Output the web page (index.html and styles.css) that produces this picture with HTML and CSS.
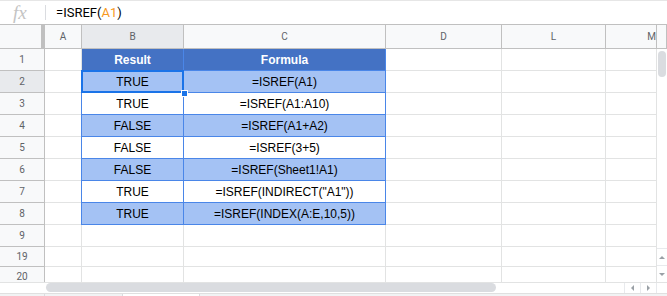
FILE: index.html
```html
<!DOCTYPE html>
<html>
    <head>
        <meta charset="UTF-8">
        <title>ISREF</title>
        <link rel="stylesheet" href="styles.css">
    </head>
    <body>
        <div class="formula-bar">
            <span class="fx">fx</span>
            <span class="fx-sep"></span>
            <span class="fx-text">=ISREF(<span class="ref">A1</span>)</span>
        </div>
        <div class="sheet">
            <div class="corner"></div>
            <div class="col-head">A</div>
            <div class="col-head sel">B</div>
            <div class="col-head">C</div>
            <div class="col-head">D</div>
            <div class="col-head">L</div>
            <div class="col-head clip">M</div>
            <div class="col-head"></div>

            <div class="row-head">1</div>
            <div class="cell"></div>
            <div class="cell t-head">Result</div>
            <div class="cell t-head">Formula</div>
            <div class="cell"></div>
            <div class="cell"></div>
            <div class="cell"></div>
            <div class="vscroll">
                <div class="thumb"></div>
                <div class="spacer"></div>
                <div class="arrow up"></div>
                <div class="arrow down"></div>
            </div>

            <div class="row-head sel">2</div>
            <div class="cell"></div>
            <div class="cell t-band selected">TRUE</div>
            <div class="cell t-band">=ISREF(A1)</div>
            <div class="cell"></div>
            <div class="cell"></div>
            <div class="cell"></div>

            <div class="row-head">3</div>
            <div class="cell"></div>
            <div class="cell t-plain">TRUE</div>
            <div class="cell t-plain">=ISREF(A1:A10)</div>
            <div class="cell"></div>
            <div class="cell"></div>
            <div class="cell"></div>

            <div class="row-head">4</div>
            <div class="cell"></div>
            <div class="cell t-band">FALSE</div>
            <div class="cell t-band">=ISREF(A1+A2)</div>
            <div class="cell"></div>
            <div class="cell"></div>
            <div class="cell"></div>

            <div class="row-head">5</div>
            <div class="cell"></div>
            <div class="cell t-plain">FALSE</div>
            <div class="cell t-plain">=ISREF(3+5)</div>
            <div class="cell"></div>
            <div class="cell"></div>
            <div class="cell"></div>

            <div class="row-head">6</div>
            <div class="cell"></div>
            <div class="cell t-band">FALSE</div>
            <div class="cell t-band">=ISREF(Sheet1!A1)</div>
            <div class="cell"></div>
            <div class="cell"></div>
            <div class="cell"></div>

            <div class="row-head">7</div>
            <div class="cell"></div>
            <div class="cell t-plain">TRUE</div>
            <div class="cell t-plain">=ISREF(INDIRECT("A1"))</div>
            <div class="cell"></div>
            <div class="cell"></div>
            <div class="cell"></div>

            <div class="row-head">8</div>
            <div class="cell"></div>
            <div class="cell t-band">TRUE</div>
            <div class="cell t-band">=ISREF(INDEX(A:E,10,5))</div>
            <div class="cell"></div>
            <div class="cell"></div>
            <div class="cell"></div>

            <div class="row-head">9</div>
            <div class="cell"></div>
            <div class="cell"></div>
            <div class="cell"></div>
            <div class="cell"></div>
            <div class="cell"></div>
            <div class="cell"></div>

            <div class="row-head">19</div>
            <div class="cell"></div>
            <div class="cell"></div>
            <div class="cell"></div>
            <div class="cell"></div>
            <div class="cell"></div>
            <div class="cell"></div>

            <div class="row-head last">20</div>
            <div class="cell last"></div>
            <div class="cell last"></div>
            <div class="cell last"></div>
            <div class="cell last"></div>
            <div class="cell last"></div>
            <div class="cell last"></div>
        </div>
        <div class="hscroll">
            <div class="h-left"></div>
            <div class="h-track"><div class="h-thumb"></div></div>
            <div class="h-arrow left"></div>
            <div class="h-arrow right"></div>
            <div class="h-corner"></div>
        </div>
        <div class="tabs">
            <div class="tab t1"></div>
            <div class="tab t2"></div>
            <div class="tab t3"></div>
        </div>
    </body>
</html>
```

FILE: styles.css
```css
body{
    margin: 0;
    width: 667px;
    height: 296px;
    overflow: hidden;
    background: #fff;
    font-family: "Liberation Sans", Arial, sans-serif;
}
.formula-bar{
    height: 24px;
    border-top: 1px solid #e6e6e6;
    border-bottom: 1px solid #c0c0c0;
    box-sizing: border-box;
    height: 25px;
    display: flex;
    align-items: center;
}
.fx{
    width: 45px;
    box-sizing: border-box;
    padding-left: 13px;
    font-family: "Liberation Serif", serif;
    font-style: italic;
    font-size: 19px;
    color: #c4c4c4;
    line-height: 20px;
}
.fx-sep{
    width: 1px;
    height: 15px;
    background: #dadce0;
}
.fx-text{
    padding-left: 10px;
    font-family: Roboto, "Liberation Sans", sans-serif;
    font-size: 13px;
    color: #000;
}
.ref{
    color: #f7981d;
}
.sheet{
    display: grid;
    grid-template-columns: 45px 37px 102px 202px 116px 104px 51px 10px;
    grid-template-rows: 24px repeat(9, 22px) 20px 15px;
}
.corner{
    background: #f8f9fa;
    border-right: 4px solid #c0c0c0;
    border-bottom: 1px solid #c0c0c0;
}
.col-head, .row-head{
    background: #f8f9fa;
    color: #5f6368;
    font-family: Roboto, "Liberation Sans", sans-serif;
    font-size: 10px;
    display: flex;
    align-items: center;
    justify-content: center;
    overflow: hidden;
}
.col-head{
    border-right: 1px solid #c0c0c0;
    border-bottom: 1px solid #c0c0c0;
}
.col-head.clip{
    justify-content: flex-end;
}
.row-head{
    border-right: 1px solid #c0c0c0;
    border-bottom: 1px solid #c0c0c0;
}
.row-head.last{
    align-items: flex-end;
    border-bottom: none;
}
.col-head.sel, .row-head.sel{
    background: #e8eaed;
}
.cell{
    border-right: 1px solid #e2e3e3;
    border-bottom: 1px solid #e2e3e3;
    display: flex;
    align-items: center;
    justify-content: center;
    font-size: 12px;
    color: #000;
    white-space: nowrap;
}
.cell.last{
    border-bottom: none;
}
.t-head, .t-band, .t-plain{
    border-right-color: #4a86e8;
    border-bottom-color: #4a86e8;
    box-shadow: -1px 0 0 #4a86e8;
}
.t-head{
    background: #4472c4;
    color: #fff;
    font-weight: bold;
    border-right-color: #4a86e8;
    box-shadow: none;
}
.t-band{
    background: #a4c2f4;
}
.t-plain{
    background: #fff;
}
.selected{
    position: relative;
}
.selected::after{
    content: "";
    position: absolute;
    left: -1px;
    top: -1px;
    right: -1px;
    bottom: -1px;
    border: 2px solid #1a73e8;
}
.selected::before{
    content: "";
    position: absolute;
    right: -5px;
    bottom: -5px;
    width: 5px;
    height: 5px;
    background: #1a73e8;
    border: 1px solid #fff;
    z-index: 2;
}
.vscroll{
    grid-column: 8;
    grid-row: 2 / 13;
    display: flex;
    flex-direction: column;
    background: #fff;
}
.thumb{
    margin: 2px 0 0 1px;
    width: 8px;
    height: 26px;
    border-radius: 4px;
    background: #dadce0;
}
.spacer{
    flex: 1;
}
.arrow{
    height: 16px;
    border-top: 1px solid #e8eaed;
    display: flex;
    align-items: center;
    justify-content: center;
}
.arrow::after{
    content: "";
    border-left: 3px solid transparent;
    border-right: 3px solid transparent;
}
.arrow.up::after{
    border-bottom: 3px solid #9aa0a6;
}
.arrow.down::after{
    border-top: 3px solid #9aa0a6;
}
.hscroll{
    height: 11px;
    display: flex;
    border-top: 1px solid #e2e3e3;
    box-sizing: border-box;
}
.h-left{
    width: 46px;
}
.h-track{
    width: 579px;
}
.h-thumb{
    width: 450px;
    height: 9px;
    border-radius: 5px;
    background: #dadce0;
}
.h-arrow{
    width: 15px;
    border-left: 1px solid #e8eaed;
    display: flex;
    align-items: center;
    justify-content: center;
}
.h-arrow::after{
    content: "";
    border-top: 3px solid transparent;
    border-bottom: 3px solid transparent;
}
.h-arrow.left::after{
    border-right: 3px solid #9aa0a6;
}
.h-arrow.right::after{
    border-left: 3px solid #9aa0a6;
}
.h-corner{
    width: 10px;
    border-left: 1px solid #e8eaed;
}
.tabs{
    height: 3px;
    display: flex;
    background: #f1f3f4;
    border-top: 1px solid #e0e0e0;
}
.tab{
    border-right: 1px solid #dadce0;
}
.t1{
    width: 44px;
}
.t2{
    width: 77px;
}
.t3{
    width: 76px;
    background: #fff;
}
```
